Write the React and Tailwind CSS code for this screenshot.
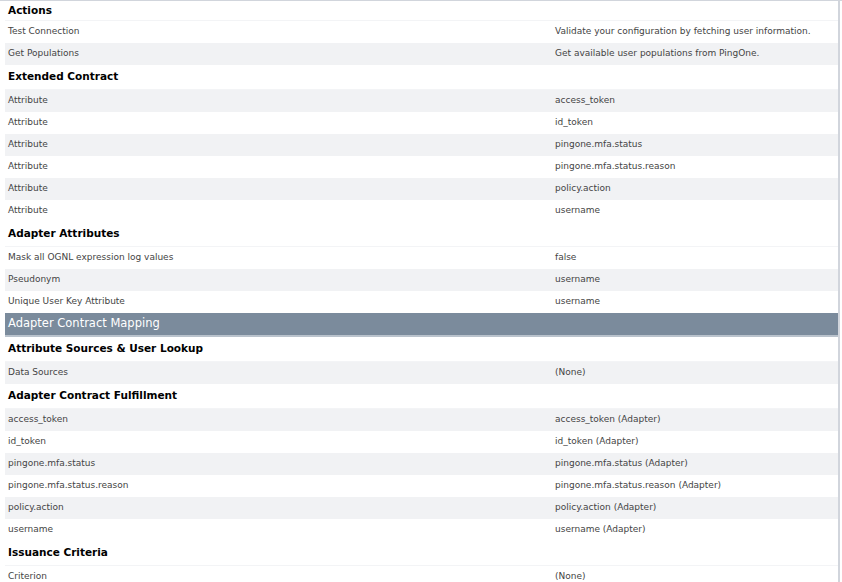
import React from 'react';

const sections = [
  { type: 'h', text: 'Actions', h: 'h-[20px]' },
  { type: 'r', a: 'Test Connection', b: 'Validate your configuration by fetching user information.', g: false },
  { type: 'r', a: 'Get Populations', b: 'Get available user populations from PingOne.', g: true },
  { type: 'h', text: 'Extended Contract' },
  { type: 'r', a: 'Attribute', b: 'access_token', g: true },
  { type: 'r', a: 'Attribute', b: 'id_token', g: false },
  { type: 'r', a: 'Attribute', b: 'pingone.mfa.status', g: true },
  { type: 'r', a: 'Attribute', b: 'pingone.mfa.status.reason', g: false },
  { type: 'r', a: 'Attribute', b: 'policy.action', g: true },
  { type: 'r', a: 'Attribute', b: 'username', g: false },
  { type: 'h', text: 'Adapter Attributes' },
  { type: 'r', a: 'Mask all OGNL expression log values', b: 'false', g: false },
  { type: 'r', a: 'Pseudonym', b: 'username', g: true },
  { type: 'r', a: 'Unique User Key Attribute', b: 'username', g: false },
  { type: 'banner', text: 'Adapter Contract Mapping' },
  { type: 'h', text: 'Attribute Sources & User Lookup' },
  { type: 'r', a: 'Data Sources', b: '(None)', g: true },
  { type: 'h', text: 'Adapter Contract Fulfillment' },
  { type: 'r', a: 'access_token', b: 'access_token (Adapter)', g: true },
  { type: 'r', a: 'id_token', b: 'id_token (Adapter)', g: false },
  { type: 'r', a: 'pingone.mfa.status', b: 'pingone.mfa.status (Adapter)', g: true },
  { type: 'r', a: 'pingone.mfa.status.reason', b: 'pingone.mfa.status.reason (Adapter)', g: false },
  { type: 'r', a: 'policy.action', b: 'policy.action (Adapter)', g: true },
  { type: 'r', a: 'username', b: 'username (Adapter)', g: false },
  { type: 'h', text: 'Issuance Criteria' },
  { type: 'r', a: 'Criterion', b: '(None)', g: false },
];

export default function App() {
  return (
    <div className="w-[842px] h-[582px] overflow-hidden bg-white border-t border-gray-300 pl-[5px] pr-[2px]" style={{ fontFamily: '"DejaVu Sans", sans-serif' }}>
      <div className="border-r-2 border-gray-300 h-full">
        {sections.map((s, i) => {
          if (s.type === 'h')
            return (
              <div key={i} className={`${s.h || 'h-[25px]'} flex items-center px-[3px] text-[10.5px] font-bold text-black border-b border-gray-100`}>
                {s.text}
              </div>
            );
          if (s.type === 'banner')
            return (
              <div key={i} className="h-[24px] flex items-center px-[3px] bg-[#7b8b9c] text-white text-[11.5px] border-b-2 border-[#b9c2cc]">
                {s.text}
              </div>
            );
          return (
            <div key={i} className={`h-[22px] flex items-center text-[9px] text-[#444] ${s.g ? 'bg-[#f1f2f4]' : 'bg-white'}`}>
              <div className="w-[550px] px-[3px]">{s.a}</div>
              <div>{s.b}</div>
            </div>
          );
        })}
      </div>
    </div>
  );
}
